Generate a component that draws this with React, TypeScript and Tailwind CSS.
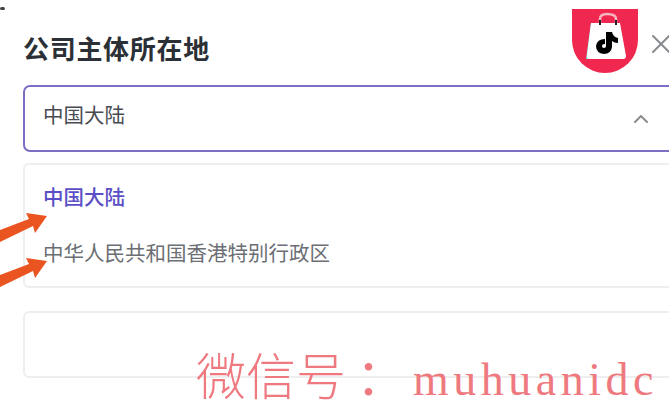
import React from 'react';
import { ChevronUp, X } from 'lucide-react';

const CJK = "font-['Inter','Noto_Sans_CJK_SC',sans-serif]";

const Arrow = ({ className }: { className: string }) => (
  <svg className={className} width="48" height="40" viewBox="0 0 48 40">
    <path d="M0 25 L29 14 L26 8 L47 11 L35 28 L33 21 L0 37 Z" fill="#ea5420" />
  </svg>
);

const TikTokBadge = () => (
  <svg className="absolute left-[571px] top-[9px]" width="68" height="65" viewBox="0 0 68 65">
    <path d="M1 0 H67 V31 A33 33 0 0 1 1 31 Z" fill="#f0284f" />
    <path d="M20 14 H24 L18 50 H15 Z" fill="#7fe3e0" />
    <path d="M20 14 H49 L55 47 Q55 50 52 50 H19 Q16 50 16 47 Z" fill="#ffffff" />
    <path d="M29 14 V10 Q29 5 36 5 Q45 5 45 10 V14" fill="none" stroke="#f6b3c0" strokeWidth="2.5" />
    <path d="M29 11 V16 M45 11 V16" stroke="#222222" strokeWidth="2" />
    <path
      d="M35 23 H41 Q42 28 47 29 V34 Q43 34 41 32 V38 Q40 45 33 45 Q25 44 25 37 Q26 30 34 30 V35 Q31 35 31 37 Q31 39 33 39 Q35 39 35 37 Z"
      fill="#000000"
    />
  </svg>
);

export default function App() {
  return (
    <div className={`relative w-[669px] h-[414px] overflow-hidden bg-white ${CJK}`}>
      <div className="absolute left-0 top-[7px] w-[5px] h-[3px] bg-[#444444] rounded-full" />
      <TikTokBadge />

      <div className="flex flex-col pl-[23px] pt-[32px]">
        {/* Header */}
        <div className="flex items-center justify-between h-[36px] mb-[17px]">
          <h2 className="text-[26px] leading-[36px] font-semibold text-[#2b2f36] tracking-[0.7px]">公司主体所在地</h2>
          <X className="w-[32px] h-[32px] text-[#888b90] mr-[-8px] mt-[-12px]" strokeWidth={1.5} />
        </div>

        {/* Select */}
        <div className="flex items-center justify-between w-[670px] h-[67px] pl-[18px] pr-[38px] border-2 border-[#7b6fc4] rounded-[7px] mb-[11px]">
          <span className="text-[20.5px] mt-[-5px] text-[#484c52]">中国大陆</span>
          <ChevronUp className="w-[24px] h-[24px] text-[#8a8d91]" strokeWidth={2} />
        </div>

        {/* Options */}
        <div className="flex flex-col w-[670px] h-[125px] pl-[18px] pt-[18px] border-2 border-[#eceef0] rounded-[6px] mb-[23px]">
          <span className="text-[20.5px] leading-[30px] font-medium text-[#5a4fc6]">中国大陆</span>
          <span className="text-[20.5px] leading-[30px] mt-[26px] text-[#6b6e73]">中华人民共和国香港特别行政区</span>
        </div>

        {/* Next field */}
        <div className="w-[670px] h-[67px] border-2 border-[#eceef0] rounded-[6px]" />
      </div>

      <Arrow className="absolute left-0 top-[205px]" />
      <Arrow className="absolute left-0 top-[250px]" />

      {/* Watermark */}
      <div className="absolute left-[196px] top-[343px] flex items-baseline text-[#ee7a80] whitespace-nowrap">
        <span className="text-[50px] leading-[60px] font-light font-['Noto_Sans_CJK_SC',serif]">微信号</span>
        <span className="text-[50px] leading-[60px] font-normal ml-[10px] w-[57px] font-['Noto_Sans_CJK_SC',serif]">：</span>
        <span className="text-[46px] leading-[60px] tracking-[4.5px] font-['Liberation_Serif',serif]">muhuanidc</span>
      </div>
    </div>
  );
}
